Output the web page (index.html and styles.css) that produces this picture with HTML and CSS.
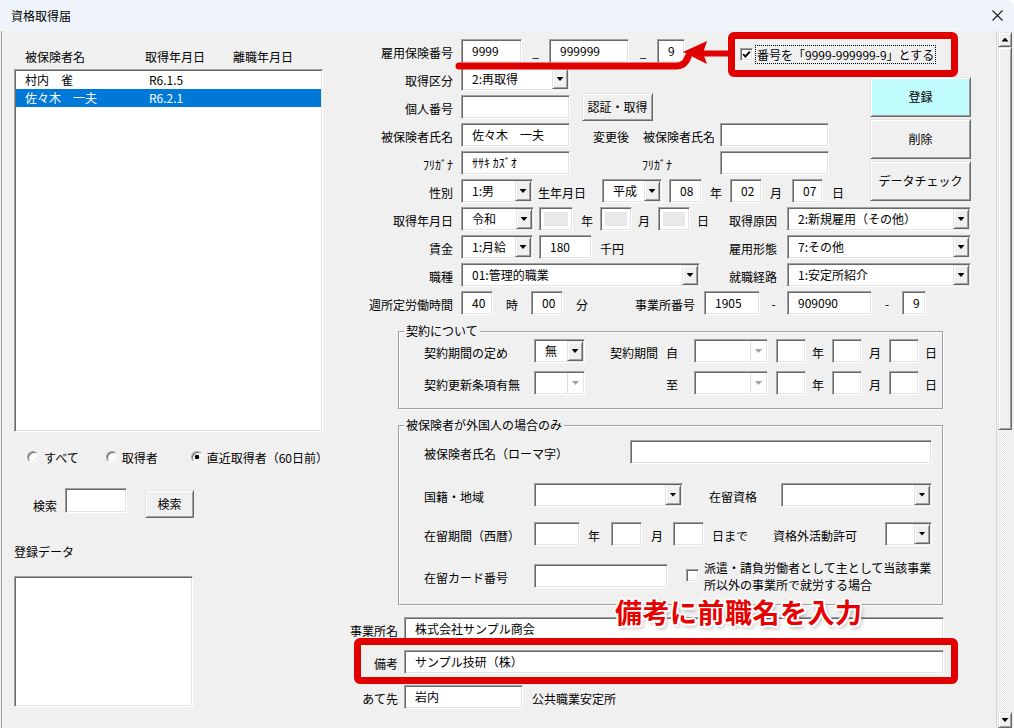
FILE: index.html
```html
<!DOCTYPE html>
<html lang="ja">
<head>
<meta charset="UTF-8">
<title>資格取得届</title>
<link rel="stylesheet" href="styles.css">
</head>
<body>
<div class="window">
  <div class="titlebar">
    <span class="title">資格取得届</span>
    <svg class="close" width="11" height="11" viewBox="0 0 11 11"><path d="M0.5 0.5L10.5 10.5M10.5 0.5L0.5 10.5" stroke="#1a1a1a" stroke-width="1.1"/></svg>
  </div>
  <div class="client">
    <!-- 左：被保険者一覧 -->
    <div class="left">
      <div class="list-head"><span class="c1h">被保険者名</span><span class="c2h">取得年月日</span><span>離職年月日</span></div>
      <div class="listbox main-list">
        <div class="item"><span class="c1i">村内　雀</span><span>R6.1.5</span></div>
        <div class="item on"><span class="c1i">佐々木　一夫</span><span>R6.2.1</span></div>
      </div>
      <div class="radios">
        <span class="rd"></span><span class="ml5">すべて</span>
        <span class="rd ml27"></span><span class="ml4">取得者</span>
        <span class="rd on ml33"></span><span class="ml4">直近取得者（60日前）</span>
      </div>
      <div class="search">
        <span class="search-lbl">検索</span>
        <span class="tb w62 h25 ml8"></span>
        <span class="btn search-btn">検索</span>
      </div>
      <div class="reg-lbl">登録データ</div>
      <div class="listbox reg-list"></div>
    </div>

    <!-- 右：入力フォーム -->
    <div class="form">
      <div class="top">
        <div class="top-rows">
          <div class="frow">
            <span class="lbl">雇用保険番号</span>
            <span class="tb w61">9999</span>
            <span class="sep w27">_</span>
            <span class="tb w80">999999</span>
            <span class="sep w28">_</span>
            <span class="tb w28">9</span>
            <span class="ck ml55 low"><svg width="9" height="9" viewBox="0 0 9 9"><path d="M1.2 4.2L3.4 6.6L7.8 1.6" fill="none" stroke="#000" stroke-width="1.9"/></svg></span>
            <span class="focus ml3 low">番号を「9999-999999-9」とする</span>
          </div>
          <div class="frow">
            <span class="lbl">取得区分</span>
            <span class="cb w109"><span class="val">2:再取得</span><span class="dd"></span></span>
          </div>
          <div class="frow">
            <span class="lbl">個人番号</span>
            <span class="tb w109"></span>
            <span class="btn auth ml12">認証・取得</span>
          </div>
          <div class="frow">
            <span class="lbl">被保険者氏名</span>
            <span class="tb w109">佐々木　一夫</span>
            <span class="txt ml23">変更後</span>
            <span class="txt ml14">被保険者氏名</span>
            <span class="tb w109 ml5"></span>
          </div>
          <div class="frow">
            <span class="lbl">ﾌﾘｶﾞﾅ</span>
            <span class="tb w109">ｻｻｷ ｶｽﾞｵ</span>
            <span class="txt ml72 w78">ﾌﾘｶﾞﾅ</span>
            <span class="tb w109"></span>
          </div>
          <div class="frow">
            <span class="lbl">性別</span>
            <span class="cb w72"><span class="val">1:男</span><span class="dd"></span></span>
            <span class="txt ml5">生年月日</span>
            <span class="cb w60 ml16"><span class="val">平成</span><span class="dd"></span></span>
            <span class="tb w33 ml7">08</span>
            <span class="txt ml8">年</span>
            <span class="tb w32 ml8">02</span>
            <span class="txt ml8">月</span>
            <span class="tb w31 ml10">07</span>
            <span class="txt ml9">日</span>
          </div>
        </div>
        <div class="side-btns">
          <span class="btn reg">登録</span>
          <span class="btn">削除</span>
          <span class="btn">データチェック</span>
        </div>
      </div>

      <div class="frow">
        <span class="lbl">取得年月日</span>
        <span class="cb w73"><span class="val">令和</span><span class="dd"></span></span>
        <span class="tb dis w34 ml5"></span>
        <span class="txt ml8">年</span>
        <span class="tb dis w32 ml7"></span>
        <span class="txt ml6">月</span>
        <span class="tb dis w32 ml8"></span>
        <span class="txt ml7">日</span>
        <span class="rgrp"><span class="txt">取得原因</span><span class="cb w184"><span class="val">2:新規雇用（その他）</span><span class="dd"></span></span></span>
      </div>
      <div class="frow">
        <span class="lbl">賃金</span>
        <span class="cb w72"><span class="val">1:月給</span><span class="dd"></span></span>
        <span class="tb w53 ml6">180</span>
        <span class="txt ml8">千円</span>
        <span class="rgrp"><span class="txt">雇用形態</span><span class="cb w184"><span class="val">7:その他</span><span class="dd"></span></span></span>
      </div>
      <div class="frow">
        <span class="lbl">職種</span>
        <span class="cb w239"><span class="val">01:管理的職業</span><span class="dd"></span></span>
        <span class="rgrp"><span class="txt">就職経路</span><span class="cb w184"><span class="val">1:安定所紹介</span><span class="dd"></span></span></span>
      </div>
      <div class="frow">
        <span class="lbl">週所定労働時間</span>
        <span class="tb w32">40</span>
        <span class="txt ml13">時</span>
        <span class="tb w32 ml13">00</span>
        <span class="txt ml13">分</span>
        <span class="txt ml47">事業所番号</span>
        <span class="tb w56 ml9">1905</span>
        <span class="sep w27">-</span>
        <span class="tb w85">909090</span>
        <span class="sep w30">-</span>
        <span class="tb w24">9</span>
      </div>

      <fieldset class="group g1">
        <legend>契約について</legend>
        <div class="gbody">
          <div class="grow">
            <span class="glbl">契約期間の定め</span>
            <span class="cb w51"><span class="val">無</span><span class="dd"></span></span>
            <span class="txt w81 tr">契約期間</span>
            <span class="txt">自</span>
            <span class="cb dis w74 ml16"><span class="val"></span><span class="dd"></span></span>
            <span class="tb w30 ml8"></span>
            <span class="txt ml6">年</span>
            <span class="tb w30 ml8"></span>
            <span class="txt ml7">月</span>
            <span class="tb w30 ml8"></span>
            <span class="txt ml6">日</span>
          </div>
          <div class="grow mt8">
            <span class="glbl">契約更新条項有無</span>
            <span class="cb dis w51"><span class="val"></span><span class="dd"></span></span>
            <span class="txt w81"></span>
            <span class="txt">至</span>
            <span class="cb dis w74 ml16"><span class="val"></span><span class="dd"></span></span>
            <span class="tb w30 ml8"></span>
            <span class="txt ml6">年</span>
            <span class="tb w30 ml8"></span>
            <span class="txt ml7">月</span>
            <span class="tb w30 ml8"></span>
            <span class="txt ml6">日</span>
          </div>
        </div>
      </fieldset>

      <fieldset class="group g2">
        <legend>被保険者が外国人の場合のみ</legend>
        <div class="gbody">
          <div class="grow">
            <span class="glbl w206">被保険者氏名（ローマ字）</span>
            <span class="tb w302"></span>
          </div>
          <div class="grow h25 mt18">
            <span class="glbl">国籍・地域</span>
            <span class="cb w149"><span class="val"></span><span class="dd"></span></span>
            <span class="txt ml26 w72">在留資格</span>
            <span class="cb w151"><span class="val"></span><span class="dd"></span></span>
          </div>
          <div class="grow h25 mt14">
            <span class="glbl">在留期間（西暦）</span>
            <span class="tb w46"></span>
            <span class="txt ml8">年</span>
            <span class="tb w31 ml11"></span>
            <span class="txt ml9">月</span>
            <span class="tb w31 ml10"></span>
            <span class="txt ml8">日まで</span>
            <span class="txt ml25">資格外活動許可</span>
            <span class="cb w47 ml28"><span class="val"></span><span class="dd"></span></span>
          </div>
          <div class="grow h25 mt17">
            <span class="glbl">在留カード番号</span>
            <span class="tb w134"></span>
            <span class="ck ml18"></span>
            <span class="txt two ml5">派遣・請負労働者として主として当該事業<br>所以外の事業所で就労する場合</span>
          </div>
        </div>
      </fieldset>

      <div class="brow mt12">
        <span class="blbl">事業所名</span>
        <span class="tb w540">株式会社サンプル商会</span>
      </div>
      <div class="brow mt9">
        <span class="blbl">備考</span>
        <span class="tb w540">サンプル技研（株）</span>
      </div>
      <div class="brow mt11">
        <span class="blbl">あて先</span>
        <span class="tb w119">岩内</span>
        <span class="txt ml9">公共職業安定所</span>
      </div>
    </div>

    <!-- スクロールバー -->
    <div class="vscroll">
      <span class="sb-btn"><span class="tri up"></span></span>
      <span class="sb-thumb"></span>
      <span class="sb-track"></span>
      <span class="sb-btn"><span class="tri"></span></span>
    </div>
  </div>

  <!-- 説明用の赤い囲み -->
  <svg class="note-arrow" width="1014" height="100" viewBox="0 0 1014 100">
    <path d="M459 66H676Q685 66 688 57" fill="none" stroke="#e00000" stroke-width="7" stroke-linecap="round"/>
    <polygon points="683,52 707,41 703,53 707,64" fill="#e00000"/>
    <path d="M700 53.5H731" stroke="#e00000" stroke-width="6"/>
  </svg>
  <div class="note-box nb1"></div>
  <div class="note-box nb2"></div>
  <div class="note-text">備考に前職名を入力</div>
</div>
</body>
</html>
```

FILE: styles.css
```css
*{
    margin:0;
    padding:0;
    box-sizing:border-box;
}
body{
    background:#fff;
    font-family:"Noto Sans CJK JP","Noto Sans",sans-serif;
    font-size:12px;
    line-height:16px;
    color:#000;
}
.window{
    position:relative;
    width:1014px;
    height:728px;
    overflow:hidden;
}
.titlebar{
    height:31px;
    display:flex;
    align-items:center;
    justify-content:space-between;
    padding:0 11px;
    background:#eef4f9;
    border-top-right-radius:8px;
}
.title{
    padding-top:1px;
}
.client{
    display:flex;
    height:697px;
    background:#f0f0f0;
    box-shadow:inset 1px 0 #f0f0f0, inset 2px 0 #a0a0a0;
}

/* 共通コントロール */
.tb,.cb,.listbox,.ck,.rd{
    background:#fff;
    border:1px solid;
    border-color:#a0a0a0 #fff #fff #a0a0a0;
    box-shadow:inset 1px 1px #696969, inset -1px -1px #e3e3e3;
}
.tb{
    height:24px;
    padding-left:10px;
    display:flex;
    align-items:center;
    white-space:nowrap;
}
.tb.dis{
    background:#e9e9e9;
    box-shadow:inset 1px 1px #696969, inset -1px -1px #e3e3e3, inset 0 0 0 4px #fff;
}
.cb{
    height:24px;
    display:flex;
    padding:1px 1px 1px 10px;
}
.cb .val{
    flex:1;
    display:flex;
    align-items:center;
    white-space:nowrap;
}
.cb .dd{
    width:16px;
    flex:none;
    display:flex;
    align-items:center;
    justify-content:center;
    background:#f0f0f0;
    border:1px solid;
    border-color:#e3e3e3 #696969 #696969 #e3e3e3;
    box-shadow:inset 1px 1px #fff, inset -1px -1px #a0a0a0;
}
.cb .dd::after,.tri{
    content:"";
    width:7px;
    height:4px;
    background:#000;
    clip-path:polygon(0 0,100% 0,50% 100%);
}
.tri.up{
    clip-path:polygon(50% 0,100% 100%,0 100%);
}
.cb.dis .dd{
    background:#fff;
    border:none;
    border-left:1px solid #dcdcdc;
    box-shadow:none;
}
.cb.dis .dd::after{
    background:#a0a0a0;
}
.btn{
    display:flex;
    align-items:center;
    justify-content:center;
    background:#f0f0f0;
    border:1px solid;
    border-color:#e3e3e3 #696969 #696969 #e3e3e3;
    box-shadow:inset 1px 1px #fff, inset -1px -1px #a0a0a0;
    white-space:nowrap;
}
.ck{
    width:13px;
    height:13px;
    display:flex;
    align-items:center;
    justify-content:center;
}
.rd{
    width:12px;
    height:12px;
    border-radius:50%;
}
.rd.on{
    background:radial-gradient(circle at 50% 50%,#000 0 2px,#fff 2.6px);
}
.focus{
    outline:1px dotted #000;
    padding:0 1px;
    line-height:17px;
    white-space:nowrap;
}
.txt{
    padding-top:4px;
    white-space:nowrap;
}
.sep{
    text-align:center;
    padding-top:2px;
}
.tr{
    text-align:right;
    padding-right:8px;
}

/* 左パネル */
.left{
    width:340px;
    flex:none;
    padding:18px 0 0 14px;
}
.list-head{
    display:flex;
    padding-left:11px;
    height:16px;
}
.c1h{width:120px;}
.c2h{width:88px;}
.listbox{
    padding:1px;
}
.main-list{
    width:309px;
    height:363px;
    margin-top:4px;
}
.item{
    height:18px;
    display:flex;
    align-items:center;
    padding-left:9px;
}
.item.on{
    background:#0078d7;
    color:#fff;
}
.c1i{width:124px;}
.radios{
    display:flex;
    align-items:center;
    height:16px;
    margin-top:18px;
    padding-left:13px;
}
.radios > *{flex:none;}
.radios .rd{margin-top:-3px;}
.search{
    display:flex;
    align-items:flex-start;
    margin-top:22px;
}
.search > *{flex:none;}
.search-lbl{
    margin:10px 0 0 19px;
}
.search-btn{
    width:49px;
    height:28px;
    margin:2px 0 0 18px;
}
.reg-lbl{
    margin-top:26px;
}
.reg-list{
    width:179px;
    height:131px;
    margin-top:16px;
}

/* 右フォーム */
.form{
    width:656px;
    flex:none;
    padding:8px 25px 0 0;
}
.top{
    display:flex;
}
.top-rows{
    width:530px;
    flex:none;
}
.side-btns{
    width:101px;
    flex:none;
    margin-top:38px;
    display:flex;
    flex-direction:column;
    gap:2px;
}
.side-btns .btn{
    height:40px;
}
.side-btns .reg{
    background:#c0fcfc;
}
.frow{
    display:flex;
    align-items:center;
    height:24px;
    margin-bottom:4px;
}
.frow > *,.grow > *,.brow > *{flex:none;}
.lbl{
    width:113px;
    margin-right:8px;
    text-align:right;
    padding-top:4px;
    white-space:nowrap;
}
.low{margin-top:6px;}
.auth{
    width:71px;
    height:28px;
}
.rgrp{
    margin-left:auto;
    display:flex;
    align-items:center;
}
.rgrp .txt{margin-right:10px;}

.group{
    width:545px;
    margin:8px 0 0 58px;
    border:1px solid #a0a0a0;
    box-shadow:inset 1px 1px #fff, 1px 1px #fff;
    padding:0;
    min-width:0;
}
.group legend{
    margin-left:5px;
    padding:0 2px;
    line-height:16px;
    background:#f0f0f0;
}
.g1 .gbody{
    padding:0 0 13px 25px;
}
.g2 .gbody{
    padding:7px 0 16px 25px;
}
.grow{
    display:flex;
    align-items:center;
    height:24px;
}
.glbl{
    width:110px;
    padding-top:4px;
    white-space:nowrap;
}
.two{
    line-height:17px;
    padding-top:0;
}
.brow{
    display:flex;
    align-items:center;
    height:24px;
}
.blbl{
    width:58px;
    margin-right:6px;
    text-align:right;
    padding-top:4px;
}

/* スクロールバー */
.vscroll{
    width:18px;
    flex:none;
    display:flex;
    flex-direction:column;
    padding:1px 2px 0 1px;
    border-left:1px solid #d9d9d9;
}
.sb-btn{
    height:15px;
    display:flex;
    align-items:center;
    justify-content:center;
    background:#f0f0f0;
    border:1px solid;
    border-color:#e3e3e3 #696969 #696969 #e3e3e3;
    box-shadow:inset 1px 1px #fff, inset -1px -1px #a0a0a0;
}
.sb-btn:last-child{height:16px;}
.sb-thumb{
    height:383px;
    background:#f0f0f0;
    border:1px solid;
    border-color:#e3e3e3 #696969 #696969 #e3e3e3;
    box-shadow:inset 1px 1px #fff, inset -1px -1px #a0a0a0;
}
.sb-track{
    flex:1;
    background:repeating-conic-gradient(#fff 0 25%,#e4e4e4 0 50%) 0 0/2px 2px;
}

/* 注釈 */
.note-arrow{
    position:absolute;
    left:0;
    top:0;
    pointer-events:none;
}
.note-box{
    position:absolute;
    border:7px solid #e00000;
    border-radius:6px;
}
.nb1{left:728px;top:32px;width:230px;height:45px;}
.nb2{left:354px;top:638px;width:604px;height:46px;}
.note-text{
    position:absolute;
    left:615px;
    top:598px;
    font-size:27px;
    font-weight:700;
    line-height:27px;
    letter-spacing:0.5px;
    color:#e60000;
    white-space:nowrap;
    text-shadow:2px 0 #fff,-2px 0 #fff,0 2px #fff,0 -2px #fff,1.5px 1.5px #fff,-1.5px -1.5px #fff,1.5px -1.5px #fff,-1.5px 1.5px #fff,2px 3px 4px rgba(0,0,0,.35);
}

/* 幅・余白 */
.w24{width:24px;} .w27{width:27px;} .w28{width:28px;} .w30{width:30px;}
.w31{width:31px;} .w32{width:32px;} .w33{width:33px;} .w34{width:34px;}
.w46{width:46px;} .w47{width:47px;} .w51{width:51px;} .w53{width:53px;}
.w56{width:56px;} .w60{width:60px;} .w61{width:61px;} .w62{width:62px;}
.w72{width:72px;} .w73{width:73px;} .w74{width:74px;} .w78{width:78px;}
.w80{width:80px;} .w81{width:81px;} .w85{width:85px;} .w109{width:109px;}
.w119{width:119px;} .w134{width:134px;} .w149{width:149px;} .w151{width:151px;}
.w184{width:184px;} .w206{width:206px;} .w239{width:239px;} .w302{width:302px;}
.w540{width:540px;}
.h25{height:25px;}
.ml3{margin-left:3px;} .ml4{margin-left:4px;} .ml5{margin-left:5px;} .ml6{margin-left:6px;}
.ml7{margin-left:7px;} .ml8{margin-left:8px;} .ml9{margin-left:9px;} .ml10{margin-left:10px;}
.ml11{margin-left:11px;} .ml12{margin-left:12px;} .ml13{margin-left:13px;} .ml14{margin-left:14px;}
.ml16{margin-left:16px;} .ml18{margin-left:18px;} .ml23{margin-left:23px;} .ml25{margin-left:25px;}
.ml26{margin-left:26px;} .ml27{margin-left:27px;} .ml28{margin-left:28px;} .ml33{margin-left:33px;}
.ml47{margin-left:47px;} .ml55{margin-left:55px;} .ml72{margin-left:72px;}
.mt8{margin-top:8px;} .mt9{margin-top:9px;} .mt11{margin-top:11px;} .mt12{margin-top:12px;}
.mt14{margin-top:14px;} .mt17{margin-top:17px;} .mt18{margin-top:18px;}
```
